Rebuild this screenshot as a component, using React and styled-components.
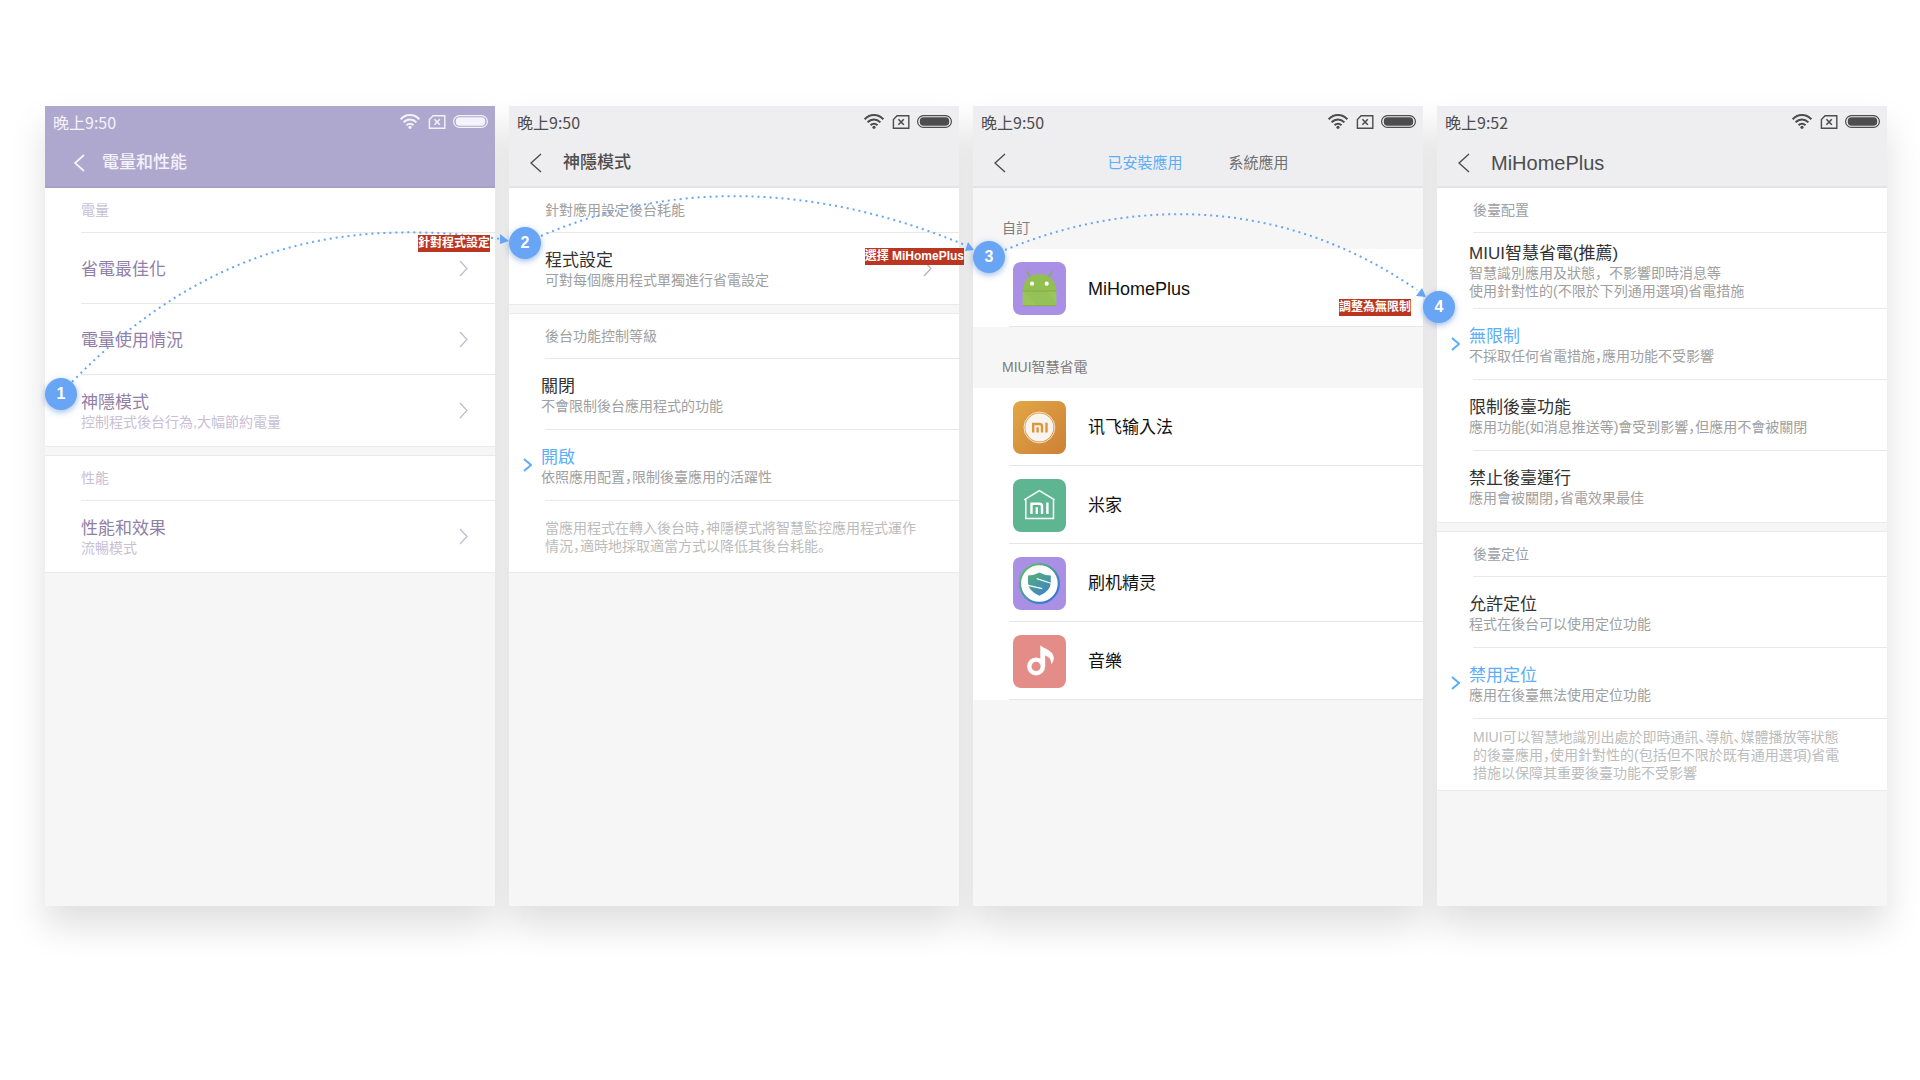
import React from 'react';
import styled, { createGlobalStyle, css } from 'styled-components';

const GlobalStyle = createGlobalStyle`
  *, *::before, *::after { box-sizing: border-box; }
  body {
    margin: 0;
    background: #fff;
    font-family: "Liberation Sans", "Noto Sans CJK TC", sans-serif;
  }
  button {
    font: inherit;
    color: inherit;
    background: none;
    border: 0;
    padding: 0;
    text-align: left;
    cursor: pointer;
  }
`;

const muted = {
  bar: '#afa8ce',
  barLine: '#a8a0c8',
  barText: '#f4f2fa',
  title: '#9080a8',
  sub: '#c9c0d4',
  label: '#c9c0d4',
  arrow: '#c4bad2',
};

const plain = {
  bar: '#eeeef0',
  barLine: '#e3e3e7',
  barText: '#4d4d4f',
  title: '#333',
  sub: '#a0a0a0',
  label: '#a0a0a0',
  arrow: '#b4b4b4',
};

const Board = styled.main`
  isolation: isolate;
  display: flex;
  align-items: stretch;
  gap: 14px;
  padding: 106px 33px 106px 45px;
`;

const Screen = styled.section`
  position: relative;
  flex: 1 1 0;
  min-width: 0;
  min-height: 800px;
  background: #f6f6f6;

  /* the shadow sits below every screen, so it never darkens a neighbour */
  &::before {
    content: '';
    position: absolute;
    z-index: -1;
    inset: 0;
    box-shadow: 0 20px 34px rgba(0, 0, 0, 0.13);
  }
`;

const Surface = styled.div`
  height: 100%;
  background: #f6f6f6;
`;

const Bar = styled.header`
  background: ${(p) => p.$tone.bar};
  color: ${(p) => p.$tone.barText};
  border-bottom: 2px solid ${(p) => p.$tone.barLine};
`;

const StatusRow = styled.div`
  display: flex;
  align-items: center;
  height: 33px;
  padding: 0 7px 2px 8px;
  font-family: "Noto Sans CJK TC", sans-serif;
  font-size: 16px;
  line-height: 24px;
`;

const StatusIcons = styled.div`
  display: flex;
  align-items: center;
  gap: 8px;
  margin-left: auto;
`;

const TitleRow = styled.div`
  display: grid;
  grid-template-columns: ${(p) => (p.$tabs ? '1fr auto 1fr' : 'auto 1fr')};
  align-items: center;
  height: 47px;
  padding: 0 ${(p) => (p.$wide ? 29 : 21)}px;
`;

const BackButton = styled.button`
  display: flex;
  width: ${(p) => (p.$wide ? 28 : 33)}px;
  height: 24px;
  align-items: center;
`;

const Title = styled.h1`
  margin: 0;
  font-size: ${(p) => (p.$latin ? 20 : 17)}px;
  line-height: 24px;
  font-weight: ${(p) => (p.$latin ? 400 : 500)};
`;

const Tabs = styled.nav`
  display: flex;
  gap: 46px;
`;

const Tab = styled.button`
  font-size: 15px;
  line-height: 24px;
  color: ${(p) => (p.$active ? '#5caef8' : '#707072')};
`;

const Group = styled.div`
  background: #fff;
  border-bottom: 1px solid #ebebeb;

  & + & {
    margin-top: 8px;
    border-top: 1px solid #ebebeb;
  }
`;

const inset = css`
  &:not(:last-child)::after {
    content: '';
    position: absolute;
    left: 36px;
    right: 0;
    bottom: 0;
    height: 1px;
    background: #e8e8e8;
  }
`;

const GroupLabel = styled.h2`
  position: relative;
  margin: 0;
  padding: 10px 36px 11px;
  font-size: 14px;
  line-height: 24px;
  font-weight: 400;
  color: ${(p) => p.$tone.label};
  ${inset}
`;

const rowBox = css`
  position: relative;
  display: flex;
  align-items: center;
  width: 100%;
  min-height: ${(p) => (p.$tall ? 76 : 71)}px;
  ${inset}
`;

const LinkRow = styled.button`
  ${rowBox}
  padding: 4px 27px 4px 36px;
  color: ${(p) => p.$tone.arrow};

  & > svg { margin-left: auto; }
`;

const RowText = styled.span`
  padding-top: 2px;
`;

const RowTitle = styled.span`
  display: block;
  font-size: 17px;
  line-height: 20px;
  color: ${(p) => p.$tone.title};
`;

const RowSub = styled.span`
  display: block;
  font-family: "Liberation Sans", "Noto Sans CJK SC", sans-serif;
  font-size: 14px;
  line-height: 18px;
  color: ${(p) => p.$tone.sub};
  font-feature-settings: ${(p) => (p.$full ? 'normal' : '"halt"')};
`;

const OptionRow = styled.label`
  ${rowBox}
  padding: 4px 0 4px 14px;
  cursor: pointer;

  & > svg { margin: 0 9px 2px 0; }
`;

const OptionInput = styled.input`
  appearance: none;
  position: absolute;
  inset: 0;
  margin: 0;

  & ~ svg { visibility: hidden; color: #5caef8; }
  &:checked ~ svg { visibility: visible; }
  &:checked ~ span > span:first-child { color: #5caef8; }
`;

const Note = styled.p`
  display: flex;
  align-items: center;
  margin: 0;
  min-height: 71px;
  padding: 8px 24px 8px 36px;
  font-family: "Liberation Sans", "Noto Sans CJK SC", sans-serif;
  font-size: 14px;
  line-height: 18px;
  color: #bcbcbc;
  white-space: nowrap;
  font-feature-settings: "halt";
`;

const ListLabel = styled.h2`
  margin: 0;
  padding: 28px 29px 9px;
  font-size: 14px;
  line-height: 24px;
  font-weight: 400;
  color: #7d7d7d;
`;

const AppList = styled.ul`
  margin: 0;
  padding: 0;
  list-style: none;
  background: #fff;
`;

const AppItem = styled.li`
  position: relative;

  &::after {
    content: '';
    position: absolute;
    left: 36px;
    right: 0;
    bottom: 0;
    height: 1px;
    background: #e6e6e6;
  }
`;

const AppButton = styled.button`
  display: flex;
  align-items: center;
  gap: 22px;
  width: 100%;
  height: 78px;
  padding: 0 40px;
  font-size: ${(p) => (p.$latin ? 18 : 17)}px;
  line-height: 24px;
  color: #111;
`;

/* walkthrough layer, drawn over the screens */
const Step = styled.span`
  position: absolute;
  z-index: 3;
  top: ${(p) => p.$top}px;
  left: ${(p) => p.$left || 0}px;
  display: flex;
  align-items: center;
  justify-content: center;
  width: 32px;
  height: 32px;
  border-radius: 50%;
  background: #68a5f4;
  box-shadow: 0 2px 6px rgba(60, 120, 210, 0.5);
  color: #fff;
  font-size: 16px;
  line-height: 24px;
  font-weight: 700;
`;

const Tag = styled.span`
  position: absolute;
  z-index: 2;
  top: ${(p) => p.$top}px;
  right: ${(p) => p.$right}px;
  background: #bc3520;
  color: #fff;
  font-size: 12px;
  line-height: 17px;
  font-weight: 700;
  white-space: nowrap;
`;

const ArcSvg = styled.svg`
  position: absolute;
  z-index: 1;
  top: 0;
  left: 0;
  width: calc(100% + 14px);
  height: 300px;
  overflow: visible;
  pointer-events: none;
`;

function Arc({ d, head }) {
  return (
    <ArcSvg viewBox="0 0 464 300" preserveAspectRatio="none" aria-hidden="true">
      <path d={d} fill="none" stroke="#68a5f4" strokeWidth="2" strokeDasharray="2 4" vectorEffect="non-scaling-stroke" />
      <polygon points={head} fill="#68a5f4" />
    </ArcSvg>
  );
}

function Chevron({ w = 9, h = 17, stroke = 1.3, back }) {
  const d = back ? `M${w - 1} 1L1 ${h / 2}L${w - 1} ${h - 1}` : `M1 1L${w - 1} ${h / 2}L1 ${h - 1}`;
  return (
    <svg width={w} height={h} viewBox={`0 0 ${w} ${h}`} fill="none" stroke="currentColor" strokeWidth={stroke} aria-hidden="true">
      <path d={d} />
    </svg>
  );
}

function Status({ time }) {
  return (
    <StatusRow>
      <span>{time}</span>
      <StatusIcons>
        <svg width="20" height="15" viewBox="0 0 20 15" fill="none" stroke="currentColor" strokeWidth="2" aria-hidden="true">
          <path d="M0.7 5.3C6 -0.3 14 -0.3 19.3 5.3" />
          <path d="M3.6 8.4C7.3 4.5 12.7 4.5 16.4 8.4" />
          <path d="M6.5 11.3C8.5 9.2 11.5 9.2 13.5 11.3" />
          <circle cx="10" cy="13.3" r="1.6" fill="currentColor" stroke="none" />
        </svg>
        <svg width="17" height="14" viewBox="-0.6 0 17 14" fill="none" stroke="currentColor" strokeWidth="1.4" overflow="visible" aria-hidden="true">
          <path d="M4.5 0.8H16.2V13.2H0.8V4.5Z" />
          <path d="M5.8 4.2L11.2 9.8M11.2 4.2L5.8 9.8" strokeWidth="1.6" />
        </svg>
        <svg width="35" height="13" viewBox="0 0 35 13" fill="none" aria-hidden="true">
          <rect x="0.6" y="0.6" width="33.8" height="11.8" rx="5.9" stroke="currentColor" strokeWidth="1.2" />
          <rect x="2.8" y="2.2" width="29.4" height="8.6" rx="3.8" fill="currentColor" />
        </svg>
      </StatusIcons>
    </StatusRow>
  );
}

function TopBar({ tone = plain, time, title, latin, wide, children }) {
  return (
    <Bar $tone={tone}>
      <Status time={time} />
      <TitleRow $wide={wide} $tabs={!title}>
        <BackButton type="button" aria-label="返回" $wide={wide}>
          <Chevron back w={wide ? 11 : 12} h={wide ? 18 : 20} stroke={wide ? 1.8 : 1.4} />
        </BackButton>
        {title ? <Title $latin={latin}>{title}</Title> : children}
      </TitleRow>
    </Bar>
  );
}

function Item({ tone = plain, title, sub }) {
  return (
    <LinkRow type="button" $tone={tone}>
      <RowText>
        <RowTitle $tone={tone}>{title}</RowTitle>
        {sub && <RowSub $tone={tone}>{sub}</RowSub>}
      </RowText>
      <Chevron />
    </LinkRow>
  );
}

function Option({ name, title, lines, full, checked }) {
  return (
    <OptionRow $tall={lines.length > 1}>
      <OptionInput type="radio" name={name} defaultChecked={checked} />
      <Chevron w={9} h={14} stroke={2} />
      <RowText>
        <RowTitle $tone={plain}>{title}</RowTitle>
        {lines.map((line) => (
          <RowSub key={line} $tone={plain} $full={full}>{line}</RowSub>
        ))}
      </RowText>
    </OptionRow>
  );
}

function Lines({ lines }) {
  return (
    <Note>
      <span>
        {lines.map((line, i) => (
          <React.Fragment key={line}>
            {i > 0 && <br />}
            {line}
          </React.Fragment>
        ))}
      </span>
    </Note>
  );
}

function AppIcon({ bg, children }) {
  return (
    <svg width="53" height="53" viewBox="0 0 53 53" fill="none" aria-hidden="true">
      <rect width="53" height="53" rx="8" fill={bg} />
      {children}
    </svg>
  );
}

const AndroidIcon = () => (
  <AppIcon bg="#aa90e4">
    <path d="M13.9 9.7L18 16.5M38.9 9.7L34.8 16.5" stroke="#86b04c" strokeWidth="1.5" strokeLinecap="round" />
    <path d="M9.7 29C9.7 19 16.5 12 26.5 12S43.3 19 43.3 29Z" fill="#91bf50" />
    <path d="M9.7 29H43.3V42.5Q43.3 44 41.8 44H11.2Q9.7 44 9.7 42.5Z" fill="#9ac55c" />
    <path d="M10 29L24 43.5H43V40L33 29Z" fill="#8fbc55" opacity="0.4" />
    <path d="M9.7 29H43.3" stroke="#7da646" strokeWidth="0.8" />
    <path d="M10 43.6H43" stroke="#7da646" strokeWidth="0.8" />
    <circle cx="19" cy="21.7" r="2.1" fill="#fff" />
    <circle cx="33.7" cy="21.7" r="2.1" fill="#fff" />
  </AppIcon>
);

const InputIcon = () => (
  <AppIcon bg="url(#amber)">
    <defs>
      <linearGradient id="amber" x1="0" y1="0" x2="1" y2="1">
        <stop offset="0" stopColor="#e3a645" />
        <stop offset="1" stopColor="#cd8136" />
      </linearGradient>
    </defs>
    <circle cx="26.4" cy="26.5" r="15.4" stroke="#fbeedd" strokeWidth="0.9" />
    <circle cx="26.4" cy="26.5" r="14" fill="#f9f4ee" />
    <path d="M20.2 31.6V23H26.6Q29 23 29 25.4V31.6M24.6 26.3V31.6M33.5 21.8V31.6" stroke="#dc9640" strokeWidth="2.4" />
  </AppIcon>
);

const HomeIcon = () => (
  <AppIcon bg="#5eb592">
    <path d="M11.2 20.8L26.4 11.7L41.6 20.8M12.8 19.9V39.6H40.5V19.9" stroke="#fff" strokeWidth="1.5" />
    <path d="M18.5 35V24.7H26.6Q29 24.7 29 27.1V35M23.8 28.3V35M34.4 23.4V35" stroke="#fff" strokeWidth="2.4" />
  </AppIcon>
);

const ShieldIcon = () => (
  <AppIcon bg="#aa90e4">
    <defs>
      <linearGradient id="ring" x1="0.1" y1="0.1" x2="0.8" y2="0.9">
        <stop offset="0" stopColor="#5bbd68" />
        <stop offset="1" stopColor="#3877d6" />
      </linearGradient>
      <linearGradient id="shield" x1="0.1" y1="0" x2="0.7" y2="1">
        <stop offset="0" stopColor="#54ad7c" />
        <stop offset="1" stopColor="#3e86c4" />
      </linearGradient>
    </defs>
    <circle cx="26.4" cy="26.5" r="19.4" fill="#fff" stroke="url(#ring)" strokeWidth="2.2" />
    <path d="M15 18.5Q21 18.3 26.4 15.4Q31.8 18.3 37.8 18.5V26Q37 34.5 26.4 38.8Q15.8 34.5 15 26Z" fill="url(#shield)" />
    <path d="M23.7 21.6L38 26.2M15 28.4L29.3 31.6" stroke="#fff" strokeWidth="1.2" />
  </AppIcon>
);

const MusicIcon = () => (
  <AppIcon bg="#e48c88">
    <circle cx="23.1" cy="31.4" r="6.8" stroke="#fff" strokeWidth="4.4" />
    <path d="M27.3 10.3C31 14 40.3 15 40.8 23C40.8 25.4 39.6 28 38.2 29.2C38.4 24.5 36 21.6 32.2 20.4V31.8L27.3 28Z" fill="#fff" />
  </AppIcon>
);

const smartApps = [
  ['讯飞输入法', InputIcon],
  ['米家', HomeIcon],
  ['刷机精灵', ShieldIcon],
  ['音樂', MusicIcon],
];

function AppRow({ name, Icon, latin }) {
  return (
    <AppItem>
      <AppButton type="button" $latin={latin}>
        <Icon />
        <RowText>{name}</RowText>
      </AppButton>
    </AppItem>
  );
}

export default function App() {
  return (
    <>
      <GlobalStyle />
      <Board>
        <Screen>
          <Surface>
            <TopBar tone={muted} time="晚上9:50" title="電量和性能" wide />
            <Group>
              <GroupLabel $tone={muted}>電量</GroupLabel>
              <Item tone={muted} title="省電最佳化" />
              <Item tone={muted} title="電量使用情況" />
              <Item tone={muted} title="神隱模式" sub="控制程式後台行為,大幅節約電量" />
            </Group>
            <Group>
              <GroupLabel $tone={muted}>性能</GroupLabel>
              <Item tone={muted} title="性能和效果" sub="流暢模式" />
            </Group>
          </Surface>
          <Arc d="M27 276C167 132 310 113 455 133" head="455,128 455,138 464,135" />
          <Tag $top={129} $right={5}>針對程式設定</Tag>
          <Step $top={272}>1</Step>
        </Screen>

        <Screen>
          <Surface>
            <TopBar time="晚上9:50" title="神隱模式" />
            <Group>
              <GroupLabel $tone={plain}>針對應用設定後台耗能</GroupLabel>
              <Item title="程式設定" sub="可對每個應用程式單獨進行省電設定" />
            </Group>
            <Group>
              <GroupLabel $tone={plain}>後台功能控制等級</GroupLabel>
              <Option name="stealth" title="關閉" lines={['不會限制後台應用程式的功能']} />
              <Option name="stealth" title="開啟" lines={['依照應用配置，限制後臺應用的活躍性']} checked />
              <Lines lines={['當應用程式在轉入後台時，神隱模式將智慧監控應用程式運作', '情況，適時地採取適當方式以降低其後台耗能。']} />
            </Group>
          </Surface>
          <Arc d="M32 130C162 74 306 77 456 139" head="459,136 456,145 465,144" />
          <Tag $top={142} $right={-5}>選擇 MiHomePlus</Tag>
          <Step $top={121}>2</Step>
        </Screen>

        <Screen>
          <Surface>
            <TopBar time="晚上9:50">
              <Tabs>
                <Tab type="button" $active>已安裝應用</Tab>
                <Tab type="button">系統應用</Tab>
              </Tabs>
            </TopBar>
            <ListLabel>自訂</ListLabel>
            <AppList>
              <AppRow name="MiHomePlus" Icon={AndroidIcon} latin />
            </AppList>
            <ListLabel>MIUI智慧省電</ListLabel>
            <AppList>
              {smartApps.map(([name, Icon]) => (
                <AppRow key={name} name={name} Icon={Icon} />
              ))}
            </AppList>
          </Surface>
          <Arc d="M32 144C152 94 304 87 444 184" head="449,182 443,190 453,191" />
          <Tag $top={193} $right={12}>調整為無限制</Tag>
          <Step $top={135}>3</Step>
        </Screen>

        <Screen>
          <Surface>
            <TopBar time="晚上9:52" title="MiHomePlus" latin />
            <Group>
              <GroupLabel $tone={plain}>後臺配置</GroupLabel>
              <Option name="power" title="MIUI智慧省電(推薦)" lines={['智慧識別應用及狀態，不影響即時消息等', '使用針對性的(不限於下列通用選項)省電措施']} full />
              <Option name="power" title="無限制" lines={['不採取任何省電措施，應用功能不受影響']} checked />
              <Option name="power" title="限制後臺功能" lines={['應用功能(如消息推送等)會受到影響，但應用不會被關閉']} />
              <Option name="power" title="禁止後臺運行" lines={['應用會被關閉，省電效果最佳']} />
            </Group>
            <Group>
              <GroupLabel $tone={plain}>後臺定位</GroupLabel>
              <Option name="location" title="允許定位" lines={['程式在後台可以使用定位功能']} />
              <Option name="location" title="禁用定位" lines={['應用在後臺無法使用定位功能']} checked />
              <Lines lines={['MIUI可以智慧地識別出處於即時通訊、導航、媒體播放等狀態', '的後臺應用，使用針對性的(包括但不限於既有通用選項)省電', '措施以保障其重要後臺功能不受影響']} />
            </Group>
          </Surface>
          <Step $top={185} $left={-14}>4</Step>
        </Screen>
      </Board>
    </>
  );
}
